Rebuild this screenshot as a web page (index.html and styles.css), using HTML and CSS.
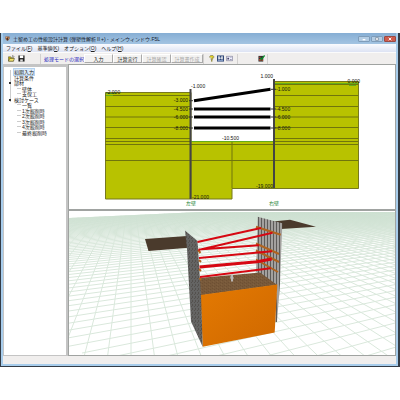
FILE: index.html
```
<!DOCTYPE html>
<html lang="ja">
<head>
    <meta charset="UTF-8">
    <meta name="viewport" content="width=device-width, initial-scale=1.0">
    <title>土留め工の性能設計計算</title>
    <link rel="stylesheet" href="styles.css">
</head>
<body>
    <div class="desktop">
        <div class="window">
            <header class="titlebar">
                <svg class="app-icon" viewBox="0 0 12 12">
                    <path d="M1 1h10v5l-3 5H4L1 7z" fill="#8b5a3c"/>
                    <path d="M2 2h3v3H2zM7 4h3v2H7z" fill="#d8a070"/>
                    <path d="M5 5h2v6H5z" fill="#3a2a2a"/>
                </svg>
                <h1>土留め工の性能設計計算 (弾塑性解析Ⅱ+) - メインウィンドウ.F5L</h1>
                <div class="caption-buttons">
                    <button class="caption" aria-label="最小化"><svg viewBox="0 0 12 6"><path d="M4 4h4" stroke="#fff" stroke-width="2"/></svg></button>
                    <button class="caption" aria-label="最大化"><svg viewBox="0 0 12 6"><path d="M4 1h4v4H4z" fill="#fff" stroke="#67788c"/></svg></button>
                    <button class="caption close" aria-label="閉じる"><svg viewBox="0 0 12 6"><path d="M4 1l4 4M8 1L4 5" stroke="#fff" stroke-width="1.4"/></svg></button>
                </div>
            </header>

            <nav class="menubar">
                <button>ファイル(<u>F</u>)</button>
                <button>基準値(<u>K</u>)</button>
                <button>オプション(<u>O</u>)</button>
                <button>ヘルプ(<u>H</u>)</button>
            </nav>

            <div class="toolbar">
                <div class="group files">
                    <button class="icon" aria-label="開く">
                        <svg viewBox="0 0 16 16"><path d="M1 4h5l1 2h6v8H1z" fill="#c8b400" stroke="#333"/><path d="M4 8h11l-3 6H1z" fill="#f4e46a" stroke="#333"/><path d="M9 3q3-3 5 1" fill="none" stroke="#222" stroke-width="1.5"/></svg>
                    </button>
                    <button class="icon" aria-label="保存">
                        <svg viewBox="0 0 16 16"><path d="M1 1h14v14H1z" fill="#222"/><path d="M4 1h8v6H4z" fill="#fff"/><path d="M5 10h6v5H5z" fill="#ddd"/></svg>
                    </button>
                </div>
                <div class="group modes">
                    <span class="mode-label">処理モードの選択</span>
                    <button class="mode">入力</button>
                    <button class="mode">計算実行</button>
                    <button class="mode" disabled>計算確認</button>
                    <button class="mode" disabled>計算書作成</button>
                </div>
                <div class="group views">
                    <button class="icon" aria-label="ヘルプ">
                        <svg viewBox="0 0 16 16"><path d="M4 6V3l2-2h5l2 2v3l-3 3v2H7V8l3-3" fill="#e0d020" stroke="#444"/><path d="M7 12h3v3H7z" fill="#7c7410"/></svg>
                    </button>
                    <button class="icon" aria-label="断面図">
                        <svg viewBox="0 0 16 16"><path d="M0 1h16v14H0z" fill="#304878"/><path d="M3 3h3v7H3zM10 3h3v7h-3zM6 6h4v2H6z" fill="#fff"/><path d="M2 12h12v2H2z" fill="#9db4dc"/></svg>
                    </button>
                    <button class="icon" aria-label="表示">
                        <svg viewBox="0 0 16 16"><path d="M1 3h14v10H1z" fill="#eef" stroke="#446"/><path d="M3 6h4v4H3zM9 6h4v1H9zM9 9h4v1H9z" fill="#446"/></svg>
                    </button>
                </div>
                <div class="group check">
                    <button class="icon" aria-label="チェック">
                        <svg viewBox="0 0 16 16"><path d="M1 2h11v13H1z" fill="#333"/><path d="M3 4h3v3H3z" fill="#c33"/><path d="M3 9h3v4H3zM8 10h3v3H8z" fill="#e05030"/><path d="M5 6l3 4 7-9" fill="none" stroke="#0a8a2a" stroke-width="3"/></svg>
                    </button>
                </div>
            </div>

            <main class="workspace">
                <aside class="sidebar">
                    <ul class="tree">
                        <li class="selected"><span>初期入力</span></li>
                        <li>計算条件</li>
                        <li class="open">部材</li>
                        <li class="child">壁体</li>
                        <li class="child">支保工</li>
                        <li class="open">検討ケース</li>
                        <li class="child">一覧</li>
                        <li class="child">1次掘削時</li>
                        <li class="child">2次掘削時</li>
                        <li class="child">3次掘削時</li>
                        <li class="child">4次掘削時</li>
                        <li class="child">最終掘削時</li>
                    </ul>
                </aside>

                <div class="views-area">
                    <section class="pane">
                        <svg class="drawing" viewBox="69 65 326 144">
                            <!-- soil -->
                            <g class="soil">
                                <path d="M105.500 92.500H191V199H105.500z"/>
                                <path d="M191 141.500H274V188.500H232V199H191z"/>
                                <path d="M274 81.500H358.500V188.500H274z"/>
                            </g>
                            <!-- layer boundaries -->
                            <path class="layer" d="M105 95.500H190M105 106.500H190M105 117H190M105 127.500H190M105 138.500H190M105 141.500H190M105 144.500H274M105 160.500H358M232 141V188"/>
                            <path class="layer" d="M275 84.500H358M275 95.500H358M275 106.500H358M275 117H358M275 127.500H358M275 138.500H358M275 141.500H358M275 144.500H358"/>
                            <path class="water" d="M191 141.500H274M106 95.500H113M106 93.500H116M275 83.500H358M349 85.500H356"/>
                            <!-- walls -->
                            <path class="wall" d="M190.500 89V199M274 79V188"/>
                            <!-- struts -->
                            <path class="strut" d="M194 100.700L270.500 89.300M194 109H270.500M194 117H270.500M194 128H270.500"/>
                            <path class="joint" d="M189 100.700H193M189 109H193M189 117H193M189 128H193M271 89.300H276M271 109H276M271 117H276M271 128H276"/>
                            <g class="level">
                                <text x="106" y="94">-2.000</text>
                                <text x="191" y="88">-1.000</text>
                                <text x="188" y="102" class="end">-3.000</text>
                                <text x="188" y="111" class="end">-4.500</text>
                                <text x="188" y="119" class="end">-6.000</text>
                                <text x="188" y="130" class="end">-8.000</text>
                                <text x="192" y="199">-21.000</text>
                                <text x="222" y="140">-10.500</text>
                                <text x="273" y="78" class="end">1.000</text>
                                <text x="276" y="91">-1.000</text>
                                <text x="276" y="111">-4.500</text>
                                <text x="276" y="119">-6.000</text>
                                <text x="276" y="130">-8.000</text>
                                <text x="273" y="188" class="end">-19.000</text>
                                <text x="360" y="83" class="end">0.000</text>
                            </g>
                            <g class="wall-name">
                                <text x="186" y="205">左壁</text>
                                <text x="269" y="205">右壁</text>
                            </g>
                        </svg>
                    </section>

                    <section class="pane">
                        <svg class="drawing" viewBox="69 211 326 144">
                            <defs>
                                <clipPath id="ground">
                                    <path d="M69 218L200 212H395V355H69z"/>
                                </clipPath>
                                <linearGradient id="haze" x1="0" y1="0" x2="0" y2="1">
                                    <stop offset="0" stop-color="#c6dccb" stop-opacity=".7"/>
                                    <stop offset="1" stop-color="#c6dccb" stop-opacity="0"/>
                                </linearGradient>
                                <linearGradient id="clay" x1="0" y1="0" x2="1" y2="1">
                                    <stop offset="0" stop-color="#e47a02"/>
                                    <stop offset="1" stop-color="#cf6800"/>
                                </linearGradient>
                                <pattern id="piles" width="3" height="8" patternUnits="userSpaceOnUse">
                                    <path d="M0 0h3v8H0z" fill="#a3a19f"/>
                                    <path d="M0 0h1v8H0z" fill="#5d5b59"/>
                                </pattern>
                                <pattern id="steel" width="3" height="4" patternUnits="userSpaceOnUse">
                                    <path d="M0 0h3v4H0z" fill="#646463"/>
                                    <path d="M0 0h1v2H0zM2 2h1v1H2z" fill="#54514e"/>
                                </pattern>
                                <pattern id="dirt" width="4" height="3" patternUnits="userSpaceOnUse">
                                    <path d="M0 0h4v3H0z" fill="#78593a"/>
                                    <path d="M0 0h1v1H0zM2 1h1v1H2z" fill="#6e5033"/>
                                    <path d="M1 2h1v1H1z" fill="#806140"/>
                                </pattern>
                            </defs>
                            <g clip-path="url(#ground)">
                                <path id="grid" class="grid"/>
                                <path d="M69 211H395V240H69z" fill="url(#haze)"/>
                            </g>
                            <path class="slab" d="M145 239L187 236L198 247L148.500 251z"/>
                            <path class="slab" d="M273 221.500L290 219.700L316 226.700L281 229z"/>
                            <path d="M257.700 216.700L282.300 223.300L280 284L277 322L275 322L277 285L256 272z" fill="url(#piles)"/>
                            <path class="waler" d="M256 226.700L280.700 234.700M256 243.500L279 254M256 250.500L279 262M256 259.500L278 272"/>
                            <path d="M199 278L260 272.500L277.300 285L200.500 295.500z" fill="url(#dirt)"/>
                            <path d="M200.500 295L277.300 284.500L274.700 332.500L202.700 346.700z" fill="url(#clay)"/>
                            <path d="M185 230.500L197.500 241L201 295L202.700 346.700L191 321.500L187 249z" fill="url(#steel)"/>
                            <path class="waler" d="M198 250L200.500 253M199 260L201 262M199 269L201 271M199.500 278L201 280"/>
                            <path class="beam" d="M197.500 242L261 228M198.500 250L272.500 232.700M198.500 249.500L259 245.300M199 258L272 251.300M200 277L270.700 268.300"/>
                            <path class="beam thick" d="M199.500 267L257 261.700L271.700 259"/>
                            <path d="M231 274.500h2v2l1 2h-1v3h-2v-3h-1z" fill="#b9b6b4"/>
                        </svg>
                    </section>
                </div>
            </main>

            <footer class="statusbar"></footer>
        </div>
    </div>
    <script src="grid.js"></script>
</body>
</html>
```

FILE: styles.css
```
* {
    box-sizing: border-box;
}
body {
    margin: 0;
    padding: 33px 0;
    height: 100vh;
    display: flex;
    background: #fff;
    font-family: "Liberation Sans", "Noto Sans CJK JP", sans-serif;
    font-size: 5px;
    line-height: 6px;
    color: #222;
}
button {
    font: inherit;
    color: inherit;
    margin: 0;
    padding: 0;
    border: none;
    background: none;
    white-space: nowrap;
}
.desktop {
    flex: 1;
    display: flex;
    min-width: 0;
    padding: 0 2px 1px 1px;
    background: #343c46;
}
.window {
    flex: 1;
    min-width: 0;
    display: flex;
    flex-direction: column;
    border: solid #a8cdec;
    border-width: 0 2px 2px;
    background: #f0eeed;
}

/* title */
.titlebar {
    display: flex;
    align-items: center;
    gap: 3px;
    height: 11px;
    padding-left: 2px;
    background: linear-gradient(#86aed4, #a3c4e2);
}
.titlebar h1 {
    flex: 1;
    margin: 0;
    font-size: 5px;
    font-weight: normal;
    white-space: nowrap;
    color: #16202c;
}
.app-icon {
    width: 5px;
    height: 5px;
}
.caption-buttons {
    display: flex;
    align-self: center;
    gap: 1px;
}
.caption {
    display: flex;
    width: 12px;
    height: 6px;
    border: 1px solid #7f9dba;
    border-radius: 1px;
    background: #b4cde4;
}
.caption svg {
    width: 100%;
    height: 100%;
}
.caption.close {
    border-color: #9a4a44;
    background: #cf5b4c;
}

/* menu */
.menubar {
    display: flex;
    align-items: center;
    gap: 5px;
    height: 8px;
    padding-left: 3px;
    background: linear-gradient(#fafbfe, #dde3f3);
}

/* toolbar */
.toolbar {
    display: flex;
    align-items: center;
    height: 12px;
    border-top: 1px solid #fbfbfb;
}
.group {
    display: flex;
    align-items: center;
    height: 10px;
    border-right: 1px solid #d2d0cf;
}
.files {
    width: 38px;
    padding-left: 5px;
    gap: 3px;
}
.modes {
    padding-left: 3px;
}
.views {
    width: 34px;
    padding-left: 4px;
    gap: 2px;
}
.check {
    width: 30px;
    padding-right: 2px;
    justify-content: flex-end;
}
.icon {
    display: flex;
}
.icon svg {
    width: 7px;
    height: 7px;
}
.mode-label {
    width: 40px;
    color: #2626c0;
    white-space: nowrap;
}
.mode {
    width: 29px;
    height: 9px;
    border: 1px solid;
    border-color: #fff #aaa #aaa #fff;
    background: #f3f2f1;
}
.mode:last-child {
    width: 32px;
}
.mode:disabled {
    color: #a3a3a3;
}

/* main area */
.workspace {
    flex: 1;
    min-height: 0;
    display: flex;
}
.sidebar {
    width: 65px;
    border: solid #c4c4c4;
    border-width: 3px 2px 1px 1px;
    background: #fff;
}
.tree {
    display: grid;
    grid-template-rows: repeat(12, 1fr);
    align-items: center;
    height: 66px;
    margin: 3px 0 0 6px;
    padding: 0 0 0 4px;
    list-style: none;
    line-height: 5px;
    white-space: nowrap;
    background: linear-gradient(#ccc, #ccc) 0 0 / 1px 32px no-repeat;
}
.tree .selected span {
    background: #dcebfa;
    outline: 1px solid #b5d3f0;
}
.tree .child {
    padding-left: 8px;
}
.tree .child::before {
    content: "";
    display: inline-block;
    width: 4px;
    height: 1px;
    margin: 0 1px 2px -5px;
    background: #ccc;
}
.tree .open::before {
    content: "";
    display: inline-block;
    width: 2px;
    height: 2px;
    margin: 0 3px 1px -5px;
    background: #333;
}
.views-area {
    flex: 1;
    min-width: 0;
    display: flex;
    flex-direction: column;
}
.pane {
    flex: 1;
    min-height: 0;
    border: 1px solid #a0a3a1;
    background: #fff;
}
.drawing {
    display: block;
    width: 100%;
    height: 100%;
}
.statusbar {
    height: 8px;
    background: #f0eeed;
}

/* section drawing */
.soil {
    fill: #b8c200;
    stroke: #77791f;
    stroke-width: 1;
}
.layer {
    fill: none;
    stroke: #70750c;
    stroke-width: 1;
}
.water {
    fill: none;
    stroke: #62ac1c;
    stroke-width: 1;
}
.wall {
    stroke: #444;
    stroke-width: 2;
}
.strut {
    stroke: #000;
    stroke-width: 3;
}
.joint {
    stroke: #333;
    stroke-width: 1;
}
.level {
    font-size: 5px;
    fill: #111;
}
.end {
    text-anchor: end;
}
.wall-name {
    font-size: 5px;
    fill: #158030;
}

/* 3D view */
.grid {
    fill: none;
    stroke: #dae8dc;
    stroke-width: 1;
}
.slab {
    fill: #4a3a2c;
}
.waler {
    fill: none;
    stroke: #b06420;
    stroke-width: 2;
}
.beam {
    fill: none;
    stroke: #d60812;
    stroke-width: 2;
}
.beam.thick {
    stroke-width: 3;
}
```

FILE: grid.js
```
// ground grid in two-point perspective
const horizon = 177;
const base = 353;
const left = { x: 131, step: 23, from: -12, to: 48 };
const right = { x: 965, start: 82, step: 49, from: -7, to: 61 };

let d = '';
for (let i = left.from; i <= left.to; i++) {
    // run past the base line so the bottom edge is covered
    const dx = left.step * i;
    d += `M${left.x} ${horizon}L${left.x + dx * 1.5} ${horizon + (base - horizon) * 1.5}`;
}
for (let j = right.from; j <= right.to; j++) {
    const x = right.start - right.step * j;
    d += `M${right.x} ${horizon}L${x} ${base}`;
    if (j < 0) {
        d += `L${x - (right.x - x)} ${base + (base - horizon)}`;
    }
}
document.getElementById('grid').setAttribute('d', d);
```
